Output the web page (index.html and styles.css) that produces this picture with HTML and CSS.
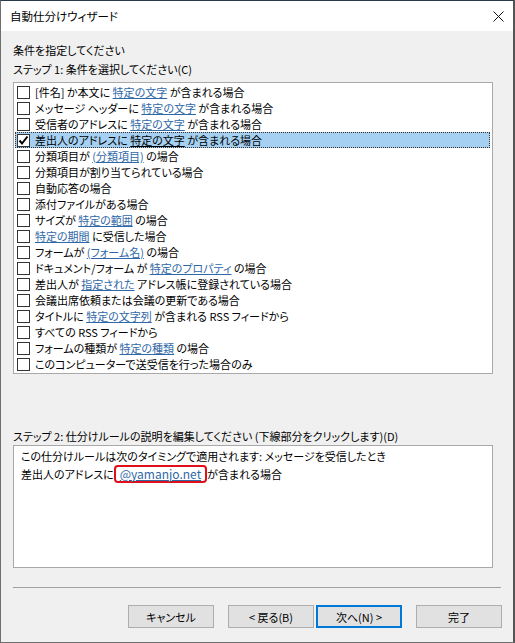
FILE: index.html
```html
<!DOCTYPE html>
<html lang="ja">
<head>
    <meta charset="UTF-8">
    <title>自動仕分けウィザード</title>
    <link rel="stylesheet" href="styles.css">
</head>
<body>
    <div class="window">
        <div class="titlebar">
            <span class="title">自動仕分けウィザード</span>
            <svg class="close" width="11" height="11" viewBox="0 0 11 11">
                <path d="M0.5 0.5 L10.5 10.5 M10.5 0.5 L0.5 10.5" stroke="#111" stroke-width="1"/>
            </svg>
        </div>

        <div class="client">
            <p class="label">条件を指定してください</p>
            <p class="label">ステップ 1: 条件を選択してください(C)</p>

            <ul class="listbox">
                <li class="row"><span class="check"></span><span>[件名] か本文に <a>特定の文字</a> が含まれる場合</span></li>
                <li class="row"><span class="check"></span><span>メッセージ ヘッダーに <a>特定の文字</a> が含まれる場合</span></li>
                <li class="row"><span class="check"></span><span>受信者のアドレスに <a>特定の文字</a> が含まれる場合</span></li>
                <li class="row selected">
                    <span class="check">
                        <svg width="11" height="11" viewBox="0 0 11 11"><path d="M1.5 5.5 L4 8.5 L9.5 1.5" fill="none" stroke="#000" stroke-width="2"/></svg>
                    </span>
                    <span>差出人のアドレスに <a>特定の文字</a> が含まれる場合</span>
                </li>
                <li class="row"><span class="check"></span><span>分類項目が <a>(分類項目)</a> の場合</span></li>
                <li class="row"><span class="check"></span><span>分類項目が割り当てられている場合</span></li>
                <li class="row"><span class="check"></span><span>自動応答の場合</span></li>
                <li class="row"><span class="check"></span><span>添付ファイルがある場合</span></li>
                <li class="row"><span class="check"></span><span>サイズが <a>特定の範囲</a> の場合</span></li>
                <li class="row"><span class="check"></span><span><a>特定の期間</a> に受信した場合</span></li>
                <li class="row"><span class="check"></span><span>フォームが <a>(フォーム名)</a> の場合</span></li>
                <li class="row"><span class="check"></span><span>ドキュメント/フォーム が <a>特定のプロパティ</a> の場合</span></li>
                <li class="row"><span class="check"></span><span>差出人が <a>指定された</a> アドレス帳に登録されている場合</span></li>
                <li class="row"><span class="check"></span><span>会議出席依頼または会議の更新である場合</span></li>
                <li class="row"><span class="check"></span><span>タイトルに <a>特定の文字列</a> が含まれる RSS フィードから</span></li>
                <li class="row"><span class="check"></span><span>すべての RSS フィードから</span></li>
                <li class="row"><span class="check"></span><span>フォームの種類が <a>特定の種類</a> の場合</span></li>
                <li class="row"><span class="check"></span><span>このコンピューターで送受信を行った場合のみ</span></li>
            </ul>

            <p class="label step2">ステップ 2: 仕分けルールの説明を編集してください (下線部分をクリックします)(D)</p>
            <div class="description">
                <p>この仕分けルールは次のタイミングで適用されます: メッセージを受信したとき</p>
                <p>差出人のアドレスに<span class="marked"><a>@yamanjo.net</a></span>が含まれる場合</p>
            </div>

            <div class="separator"></div>

            <div class="buttons">
                <button>キャンセル</button>
                <button class="back">&lt; 戻る(B)</button>
                <button class="default">次へ(N) &gt;</button>
                <button class="finish">完了</button>
            </div>
        </div>
    </div>
</body>
</html>
```

FILE: styles.css
```css
html, body {
    margin: 0;
    padding: 0;
}
body {
    font-family: "Noto Sans CJK JP", "Liberation Sans", sans-serif;
    font-size: 11px;
    font-feature-settings: "palt" 1;
    color: #000;
    background: #f0f0f0;
}
p {
    margin: 0;
}
a {
    color: #2f68a8;
    text-decoration: underline;
}
.window {
    width: 515px;
    height: 643px;
    box-sizing: border-box;
    border: 1px solid #6e6e6e;
    border-top-color: #28394a;
    border-right: 2px solid #555;
    display: flex;
    flex-direction: column;
    background: #f0f0f0;
}
.titlebar {
    height: 30px;
    background: #fff;
    display: flex;
    align-items: center;
    justify-content: space-between;
    padding: 0 9px 0 9px;
    flex-shrink: 0;
    font-size: 11.5px;
}
.client {
    flex: 1;
    padding: 10px 11px 0 12px;
}
.label {
    line-height: 19px;
}
.listbox {
    list-style: none;
    margin: 3px 0 0 0;
    padding: 1px;
    width: 480px;
    box-sizing: border-box;
    border: 1px solid #a9a9a9;
    background: #fff;
}
.row {
    height: 16px;
    display: flex;
    align-items: center;
    padding-left: 1px;
    margin-right: 1px;
    white-space: nowrap;
    line-height: 16px;
    border: 1px solid transparent;
    box-sizing: border-box;
}
.row.selected {
    background: #a5d0f1;
    border: 1px dotted #333;
}
.row.selected a {
    color: #000;
}
.check {
    width: 11px;
    height: 11px;
    border: 1px solid #333;
    background: #fff;
    margin-right: 5px;
    display: flex;
    align-items: center;
    justify-content: center;
    flex-shrink: 0;
}
.step2 {
    margin-top: 53px;
    line-height: 18px;
}
.description {
    width: 480px;
    height: 123px;
    box-sizing: border-box;
    border: 1px solid #a9a9a9;
    background: #fff;
    padding: 2px 7px;
    line-height: 17px;
}
.marked {
    display: inline-block;
    border: 2px solid #e0101a;
    border-radius: 4px;
    padding: 0 4px;
    line-height: 14px;
    font-size: 12px;
}
.separator {
    width: 488px;
    height: 0;
    border-top: 1px solid #a0a0a0;
    margin-top: 19px;
}
.buttons {
    display: flex;
    justify-content: flex-end;
    margin-top: 17px;
}
button {
    font-family: inherit;
    font-size: 11px;
    font-feature-settings: "palt" 1;
    width: 86px;
    height: 23px;
    box-sizing: border-box;
    background: #e1e1e1;
    border: 1px solid #adadad;
    padding: 0;
    margin-left: 14px;
    color: #000;
}
button.default {
    margin-left: 2px;
    border: 2px solid #0078d7;
}
```
